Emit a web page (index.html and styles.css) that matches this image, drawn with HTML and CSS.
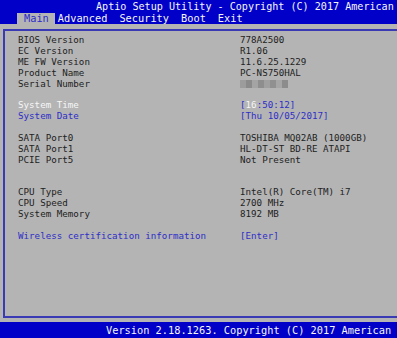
FILE: index.html
```html
<!DOCTYPE html>
<html lang="en">
<head>
    <meta charset="UTF-8">
    <meta name="viewport" content="width=device-width, initial-scale=1.0">
    <title>Aptio Setup Utility</title>
    <link rel="stylesheet" href="styles.css">
</head>
<body>
    <!-- Barra superiore -->
    <div class="testata">
        <div class="titolo">Aptio Setup Utility - Copyright (C) 2017 American</div>
        <div class="schede">
            <span class="scheda attiva">Main</span>
            <span class="scheda">Advanced</span>
            <span class="scheda">Security</span>
            <span class="scheda">Boot</span>
            <span class="scheda">Exit</span>
        </div>
    </div>
    <div class="fascia"></div>
    <!-- Pannello principale -->
    <div class="pannello">
        <div class="riga"><span>BIOS Version</span><span>778A2500</span></div>
        <div class="riga"><span>EC Version</span><span>R1.06</span></div>
        <div class="riga"><span>ME FW Version</span><span>11.6.25.1229</span></div>
        <div class="riga"><span>Product Name</span><span>PC-NS750HAL</span></div>
        <div class="riga"><span>Serial Number</span>
            <span class="sfocato">
                <i style="background:#9c9c9c"></i><i style="background:#8a8a8a"></i><i style="background:#a4a4a4"></i><i style="background:#8e8e8e"></i><i style="background:#a0a0a0"></i><i style="background:#909090"></i><i style="background:#a6a6a6"></i><i style="background:#8c8c8c"></i>
            </span>
        </div>
        <div class="vuota"></div>
        <div class="riga"><span class="bianco">System Time</span><span class="blu">[<span class="bianco">16</span>:50:12]</span></div>
        <div class="riga blu"><span>System Date</span><span>[Thu 10/05/2017]</span></div>
        <div class="vuota"></div>
        <div class="riga"><span>SATA Port0</span><span>TOSHIBA MQ02AB (1000GB)</span></div>
        <div class="riga"><span>SATA Port1</span><span>HL-DT-ST BD-RE ATAPI</span></div>
        <div class="riga"><span>PCIE Port5</span><span>Not Present</span></div>
        <div class="vuota"></div>
        <div class="vuota"></div>
        <div class="riga"><span>CPU Type</span><span>Intel(R) Core(TM) i7</span></div>
        <div class="riga"><span>CPU Speed</span><span>2700 MHz</span></div>
        <div class="riga"><span>System Memory</span><span>8192 MB</span></div>
        <div class="vuota"></div>
        <div class="riga blu"><span>Wireless certification information</span><span>[Enter]</span></div>
    </div>
    <!-- Barra inferiore -->
    <div class="piede">Version 2.18.1263. Copyright (C) 2017 American</div>
</body>
</html>
```
FILE: styles.css
```css
:root{
    --blu-testata: #0000c8;
    --grigio: #b4b4b4;
    --bordo: #3a3ab4;
    --testo: #222222;
    --testo-blu: #2e2ec8;
    --testo-bianco: #f6f6f6;
}
body{
    margin: 0;
    width: 397px;
    height: 338px;
    overflow: hidden;
    background-color: var(--grigio);
    font-family: "DejaVu Sans Mono", "Liberation Mono", monospace;
    white-space: nowrap;
}
.testata{
    background-color: var(--blu-testata);
    color: var(--testo-bianco);
    height: 24px;
    font-size: 10.3px;
}
.titolo{
    height: 13px;
    line-height: 13px;
    padding-left: 96px;
    font-size: 10.1px;
}
.schede{
    display: flex;
    height: 11px;
    line-height: 11px;
    padding-left: 17px;
}
.scheda{
    margin-right: 12px;
}
.attiva{
    background-color: var(--grigio);
    color: var(--testo-blu);
    padding-left: 7px;
    padding-right: 6px;
    margin-right: 3px;
}
.fascia{
    height: 5px;
}
.pannello{
    box-sizing: border-box;
    height: 289px;
    margin-left: 3px;
    border: 2px solid var(--bordo);
    border-right: 0;
    padding-top: 4px;
    padding-left: 13px;
    font-size: 9.2px;
    color: var(--testo);
}
.riga{
    display: grid;
    grid-template-columns: 222px 1fr;
    height: 10.9px;
    line-height: 10.9px;
}
.vuota{
    height: 10.9px;
}
.blu{
    color: var(--testo-blu);
}
.bianco{
    color: var(--testo-bianco);
}
.sfocato{
    display: flex;
    align-items: center;
}
.sfocato i{
    display: block;
    width: 6px;
    height: 8px;
}
.piede{
    margin-top: 4px;
    height: 16px;
    line-height: 16px;
    background-color: var(--blu-testata);
    color: var(--testo-bianco);
    font-size: 10.3px;
    padding-left: 106px;
}
```
